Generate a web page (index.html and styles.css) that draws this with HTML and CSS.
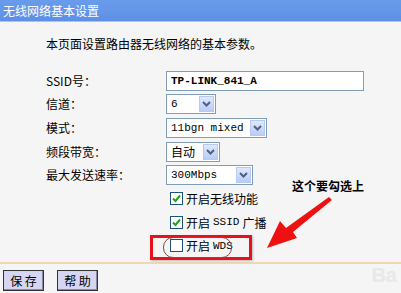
FILE: index.html
```html
<!DOCTYPE html>
<html lang="zh-CN">
<head>
  <meta charset="UTF-8">
  <title>无线网络基本设置</title>
  <link rel="stylesheet" href="styles.css">
</head>
<body>

  <div class="title-bar">无线网络基本设置</div>

  <div class="panel">
    <p class="intro">本页面设置路由器无线网络的基本参数。</p>

    <div class="settings">
      <label>SSID号：</label>
      <div class="text-input">TP-LINK_841_A</div>

      <label>信道：</label>
      <div class="select w-channel"><span class="val">6</span><span class="drop"><svg width="9" height="6" viewBox="0 0 9 6"><path d="M1 1 L4.5 4.5 L8 1" fill="none" stroke="#4d6185" stroke-width="2"/></svg></span></div>

      <label>模式：</label>
      <div class="select w-mode"><span class="val">11bgn mixed</span><span class="drop"><svg width="9" height="6" viewBox="0 0 9 6"><path d="M1 1 L4.5 4.5 L8 1" fill="none" stroke="#4d6185" stroke-width="2"/></svg></span></div>

      <label>频段带宽：</label>
      <div class="select w-band"><span class="val cjk">自动</span><span class="drop"><svg width="9" height="6" viewBox="0 0 9 6"><path d="M1 1 L4.5 4.5 L8 1" fill="none" stroke="#4d6185" stroke-width="2"/></svg></span></div>

      <label>最大发送速率：</label>
      <div class="select w-rate"><span class="val">300Mbps</span><span class="drop"><svg width="9" height="6" viewBox="0 0 9 6"><path d="M1 1 L4.5 4.5 L8 1" fill="none" stroke="#4d6185" stroke-width="2"/></svg></span></div>

      <span></span>
      <div class="check"><span class="box on"><svg width="11" height="11" viewBox="0 0 11 11"><path d="M2 5.5 L4.5 8 L9 2.5" fill="none" stroke="#21a121" stroke-width="2"/></svg></span>开启无线功能</div>

      <span></span>
      <div class="check"><span class="box on"><svg width="11" height="11" viewBox="0 0 11 11"><path d="M2 5.5 L4.5 8 L9 2.5" fill="none" stroke="#21a121" stroke-width="2"/></svg></span>开启<span class="mono">SSID</span>广播</div>

      <span></span>
      <div class="check wds"><span class="box"></span>开启<span class="mono">WDS</span></div>
    </div>

    <!-- annotation drawn over the screenshot -->
    <div class="note">这个要勾选上</div>
    <div class="red-box"></div>
    <div class="oval"></div>
    <svg class="arrow" width="80" height="60" viewBox="0 0 80 60">
      <polygon points="62,0 65,3 26,35 30,41 0,51 13,24 19,31" fill="#ee1111"/>
    </svg>
  </div>

  <div class="footer">
    <button class="btn">保 存</button>
    <button class="btn">帮 助</button>
    <span class="watermark">Ba</span>
  </div>

</body>
</html>
```

FILE: styles.css
```css
body {
  margin: 0;
  padding: 0;
  width: 401px;
  height: 293px;
  overflow: hidden;
  font-family: "Noto Sans CJK SC", "DejaVu Sans", sans-serif;
  font-size: 12px;
  color: #000;
  background: #f5f5f5;
}

.title-bar {
  height: 21px;
  line-height: 21px;
  padding-left: 3px;
  color: #fff;
  background: linear-gradient(#6a9cec, #5d8fe5);
  border-bottom: 1px solid #a9c3ef;
}

.panel {
  position: relative;
  height: 240px;
  border-bottom: 2px solid #f1d7ae;
}

.intro {
  margin: 0;
  padding: 13px 0 0 46px;
  line-height: 18px;
}

.settings {
  display: grid;
  grid-template-columns: 120px auto;
  grid-auto-rows: 23.6px;
  align-items: center;
  justify-items: start;
  padding: 16px 0 0 46px;
}

.settings label {
  line-height: 20px;
}

.text-input {
  box-sizing: border-box;
  width: 198px;
  height: 20px;
  line-height: 18px;
  padding-left: 4px;
  border: 1px solid #7f9db9;
  background: #fff;
  font-family: "Liberation Mono", monospace;
  font-size: 11px;
  font-weight: bold;
}

.select {
  box-sizing: border-box;
  display: flex;
  align-items: center;
  height: 20px;
  border: 1px solid #7f9db9;
  background: #fff;
  padding: 1px;
}

.select .val {
  flex: 1;
  padding-left: 3px;
  font-family: "Liberation Mono", monospace;
  font-size: 11px;
  white-space: nowrap;
}

.select .val.cjk {
  font-family: "Noto Sans CJK SC", sans-serif;
  font-size: 12px;
}

.drop {
  display: flex;
  align-items: center;
  justify-content: center;
  width: 15px;
  height: 16px;
  background: linear-gradient(#dfe8fd, #b9cdf8);
  border: 1px solid #b7c9f0;
  box-sizing: border-box;
}

.w-channel { width: 50px; }
.w-mode { width: 101px; }
.w-band { width: 54px; }
.w-rate { width: 87px; }

.check {
  display: flex;
  align-items: center;
  gap: 3px;
  padding-left: 4px;
}

.box {
  box-sizing: border-box;
  width: 13px;
  height: 13px;
  border: 1px solid #1c5180;
  background: #fff;
  display: flex;
  align-items: center;
  justify-content: center;
}

.mono {
  font-family: "Liberation Mono", monospace;
  font-size: 11px;
}

.note {
  position: absolute;
  left: 292px;
  top: 155px;
  font-weight: bold;
  font-size: 12px;
}

.red-box {
  position: absolute;
  left: 150px;
  top: 213px;
  width: 96px;
  height: 19px;
  border: 3px solid #e8101a;
  box-shadow: 1px 1px 2px rgba(0,0,0,0.25);
}

.oval {
  position: absolute;
  left: 163px;
  top: 215px;
  width: 67px;
  height: 19px;
  border: 1px solid #8a4a3a;
  border-radius: 10px;
}

.arrow {
  position: absolute;
  left: 267px;
  top: 175px;
}

.footer {
  position: relative;
  display: flex;
  gap: 13px;
  padding: 6px 0 0 3px;
}

.btn {
  height: 21px;
  width: 41px;
  padding: 0;
  font-family: "Noto Sans CJK SC", sans-serif;
  font-size: 12px;
  line-height: 18px;
  color: #000;
  background: #d6d6f2;
  border: 1px solid #333;
  box-shadow: inset -1px -1px 0 #8888aa;
}

.watermark {
  position: absolute;
  right: 4px;
  top: 0;
  font-family: "Liberation Sans", sans-serif;
  font-size: 20px;
  font-weight: bold;
  color: #e8e8e8;
}
```
